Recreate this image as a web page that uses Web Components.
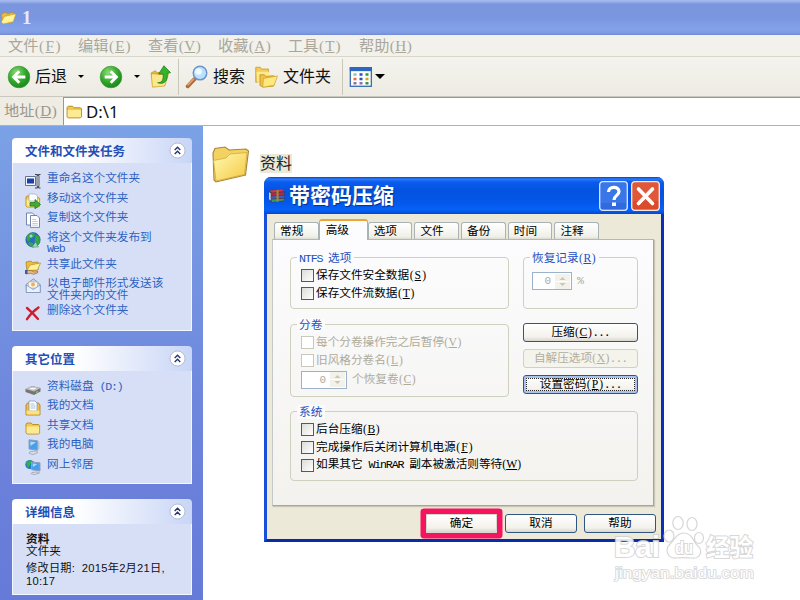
<!DOCTYPE html>
<html lang="zh-CN">
<head>
<meta charset="utf-8">
<title>1</title>
<style>
  html, body { margin: 0; height: 100%; overflow: hidden; background: #fff; }
  body { font-family: "Liberation Serif", "Noto Sans CJK SC", sans-serif; font-size: 11.65px; }
  .half { font-family: "Liberation Mono", monospace; letter-spacing: -.1em; white-space: pre; }
  .tahoma { font-family: "Noto Sans", "Noto Sans CJK SC", sans-serif; }
</style>
</head>
<body>
<explorer-window heading="1">
  <menu-item slot="menu" style="width:70px">文件<hot-key>F</hot-key></menu-item>
  <menu-item slot="menu" style="width:70px">编辑<hot-key>E</hot-key></menu-item>
  <menu-item slot="menu" style="width:70px">查看<hot-key>V</hot-key></menu-item>
  <menu-item slot="menu" style="width:70px">收藏<hot-key>A</hot-key></menu-item>
  <menu-item slot="menu" style="width:71px">工具<hot-key>T</hot-key></menu-item>
  <menu-item slot="menu">帮助<hot-key>H</hot-key></menu-item>

  <tool-button slot="tools" icon="back" size="24" style="width:92px" arrow>后退</tool-button>
  <tool-button slot="tools" icon="forward" size="24" style="width:50px" arrow></tool-button>
  <tool-button slot="tools" icon="up" size="23" style="width:29px"></tool-button>
  <tool-button slot="tools" icon="search" size="24" style="width:77px" divided>搜索</tool-button>
  <tool-button slot="tools" icon="folders" size="24" style="width:87px">文件夹</tool-button>
  <tool-button slot="tools" icon="views" size="24" divided arrow="big"></tool-button>

  <span slot="address-label">地址<hot-key>D</hot-key></span>
  <span slot="address" class="tahoma">D:\1</span>

  <task-panel slot="side" heading="文件和文件夹任务">
    <task-link icon="rename">重命名这个文件夹</task-link>
    <task-link icon="move">移动这个文件夹</task-link>
    <task-link icon="copy">复制这个文件夹</task-link>
    <task-link icon="globe">将这个文件夹发布到<br><span class="half">Web</span></task-link>
    <task-link icon="share">共享此文件夹</task-link>
    <task-link icon="mail">以电子邮件形式发送该<br>文件夹内的文件</task-link>
    <task-link icon="delete">删除这个文件夹</task-link>
  </task-panel>
  <task-panel slot="side" heading="其它位置">
    <task-link icon="disk">资料磁盘<span class="half"> (D:)</span></task-link>
    <task-link icon="docs">我的文档</task-link>
    <task-link icon="folder">共享文档</task-link>
    <task-link icon="computer">我的电脑</task-link>
    <task-link icon="network">网上邻居</task-link>
  </task-panel>
  <task-panel slot="side" heading="详细信息">
    <file-details name="资料" kind="文件夹">修改日期: &nbsp;2015年2月21日,<br>10:17</file-details>
  </task-panel>

  <folder-item>资料</folder-item>
</explorer-window>

<xp-dialog heading="带密码压缩">
  <tab-label slot="tabs">常规</tab-label>
  <tab-label slot="tabs" selected>高级</tab-label>
  <tab-label slot="tabs">选项</tab-label>
  <tab-label slot="tabs">文件</tab-label>
  <tab-label slot="tabs">备份</tab-label>
  <tab-label slot="tabs">时间</tab-label>
  <tab-label slot="tabs">注释</tab-label>

  <group-box slot="left" style="height:52px">
    <span slot="legend"><span class="half">NTFS </span>选项</span>
    <check-row>保存文件安全数据<hot-key>S</hot-key></check-row>
    <check-row>保存文件流数据<hot-key>T</hot-key></check-row>
  </group-box>
  <group-box slot="left" style="height:73px">
    <span slot="legend">分卷</span>
    <check-row disabled>每个分卷操作完之后暂停<hot-key>V</hot-key></check-row>
    <check-row disabled>旧风格分卷名<hot-key>L</hot-key></check-row>
    <spin-box value="0" style="--w:46px;margin:-1px 0 0 -1px">个恢复卷<hot-key>C</hot-key></spin-box>
  </group-box>

  <group-box slot="right" style="height:52px;margin-bottom:7px">
    <span slot="legend">恢复记录<hot-key>R</hot-key></span>
    <spin-box value="0" style="--w:40px;margin:3px 0 0 -3px"><span class="half">%</span></spin-box>
  </group-box>
  <xp-button slot="right">压缩<hot-key>C</hot-key><span class="half">...</span></xp-button>
  <xp-button slot="right" disabled>自解压选项<hot-key>X</hot-key><span class="half">...</span></xp-button>
  <xp-button slot="right" focused>设置密码<hot-key>P</hot-key><span class="half">...</span></xp-button>

  <group-box slot="bottom" style="height:70px">
    <span slot="legend">系统</span>
    <check-row>后台压缩<hot-key>B</hot-key></check-row>
    <check-row>完成操作后关闭计算机电源<hot-key>F</hot-key></check-row>
    <check-row>如果其它<span class="half"> WinRAR </span>副本被激活则等待<hot-key>W</hot-key></check-row>
  </group-box>

  <xp-button slot="footer" marked style="width:71px">确定</xp-button>
  <xp-button slot="footer" style="width:72px">取消</xp-button>
  <xp-button slot="footer" style="width:72px">帮助</xp-button>
</xp-dialog>

<water-mark></water-mark>

<script>
// Registra un elemento con su plantilla; {{attr}} se sustituye por el atributo
function define(name, css, html) {
  customElements.define(name, class extends HTMLElement {
    constructor() {
      super();
      this.attachShadow({ mode: 'open' });
    }
    connectedCallback() {
      const template = document.createElement('template');
      template.innerHTML = '<style>' + css + '</style>' +
        html.replace(/{{(\w+)}}/g, (m, a) => this.getAttribute(a) || '');
      this.shadowRoot.replaceChildren(template.content.cloneNode(true));
    }
  });
}

const folderShape = `
  <path d="M1 4.2 2 3h4.2l1.3 1.5h6.2l.9 1V13l-1 1H2l-1-1z" fill="#f3c84b" stroke="#b58a1c" stroke-width=".9"/>
  <path d="M1.6 6.6h12.6v6.3l-.6.6H2.2l-.6-.6z" fill="#fdeb94"/>`;

const icons = {
  folder: folderShape,
  open: `
    <path d="M1 5 5 3l2 1.4L12.500 3l1 2L12 12l-9 1.500z" fill="#e8b93a" stroke="#b58a1c" stroke-width=".6"/>
    <path d="M1 12.500 4 7l11-2.500-2.500 7.500-9 2z" fill="#fff39c" stroke="#c79a25" stroke-width=".6"/>`,
  back: `
    <defs><radialGradient id="g" cx=".38" cy=".3" r=".75"><stop offset="0" stop-color="#8fdc7c"/><stop offset=".55" stop-color="#35a82c"/><stop offset="1" stop-color="#14851a"/></radialGradient></defs>
    <circle cx="8" cy="8" r="7.200" fill="url(#g)" stroke="#3f9a3a" stroke-width=".5"/>
    <path d="M8.200 4.200 4.400 8l3.800 3.800M4.800 8h7.400" fill="none" stroke="#fff" stroke-width="1.900"/>`,
  forward: `
    <defs><radialGradient id="g" cx=".38" cy=".3" r=".75"><stop offset="0" stop-color="#8fdc7c"/><stop offset=".55" stop-color="#35a82c"/><stop offset="1" stop-color="#14851a"/></radialGradient></defs>
    <circle cx="8" cy="8" r="7.200" fill="url(#g)" stroke="#3f9a3a" stroke-width=".5"/>
    <path d="M7.800 4.200 11.600 8l-3.800 3.800M11.200 8H3.800" fill="none" stroke="#fff" stroke-width="1.900"/>`,
  up: `
    <path d="M1.500 5.500 4.500 4l1 1.400 6-.9v7L3 13.500z" fill="#e9b83c" stroke="#b98d22" stroke-width=".5"/>
    <path d="M1.500 6l7 .5L13.600 6 11 14.600l-8.600.8z" fill="#fbe88a" stroke="#c79a25" stroke-width=".5"/>
    <path d="M6 12.300c3 .2 4.200-2 3.800-6H6.700L10.400.5 15 5.300l-2.300.6c.5 5.200-2.200 8-6.700 6.400z" fill="#37b22d" stroke="#187a1c" stroke-width=".5"/>`,
  search: `
    <path d="M1.800 14.200 6.500 9.300" stroke="#b56a35" stroke-width="2.600" stroke-linecap="round"/>
    <path d="M1.800 13.500 6 9.200" stroke="#eaa873" stroke-width=".9"/>
    <circle cx="10" cy="5.400" r="4.500" fill="#b9e3fb" stroke="#6f93cf" stroke-width="1"/>
    <circle cx="9" cy="4.300" r="2.200" fill="#eefaff"/>`,
  folders: `
    <path d="M.5 1.500h3l1 1.200h4.500V10l-8.500 1.500z" fill="#f3cc57" stroke="#c3962a" stroke-width=".5"/>
    <path d="M1 4.500h8.800L9 10l-7.500 1.500z" fill="#fde98c"/>
    <path d="M3.300 6.500h3l1 1.200 4.500-.6 2.500 1-2 6-7 .6-2-1z" fill="#f0c145" stroke="#b98d22" stroke-width=".5"/>
    <path d="M5.600 9 15 7.300l-2.200 6.200-7.600 1.300z" fill="#ffe97e" stroke="#c79a25" stroke-width=".4"/>`,
  views: `
    <rect x=".9" y="1.800" width="14" height="12.400" fill="#fff" stroke="#3c6fb5" stroke-width=".9"/>
    <path d="M.5 1.500h14.800v2.600H.5z" fill="#2a67bd"/>
    <path d="M3 5.500h2v1.700H3z" fill="#9bb"/><path d="M7 5.500h2v1.700H7zM7 8.500h2v1.700H7z" fill="#2456b5"/>
    <path d="M11 5.500h2v1.700h-2zM11 11.300h2V13h-2z" fill="#2c9a35"/><path d="M3 8.500h2v1.700H3z" fill="#e2713c"/>
    <path d="M11 8.500h2v1.700h-2z" fill="#d9a520"/><path d="M3 11.300h2V13H3zM7 11.300h2V13H7z" fill="#8a6fb5"/>`,
  rename: `
    <path d="M.5 3.500h10v9H.5z" fill="#f4f6ff" stroke="#66708f"/><path d="M2 5.500h7v5H2z" fill="#1c3fa8"/>
    <path d="M10 1.500h2l1 1 1-1h1.500M10 15h2l1-1.500 1 1.500h1.500" fill="none" stroke="#39424f" stroke-width="1.100"/><path d="M12 2.500h2v11h-2z" fill="#d5dae8" stroke="#39424f" stroke-width=".8"/>`,
  move: folderShape + `<path d="M4 1h6l2.500 2v5H4z" fill="#fff" stroke="#8ea0b5" stroke-width=".6"/><path d="M5 9.500h5V6.500l5.500 5-5.500 4.300V13H5z" fill="#3dae33" stroke="#14701b" stroke-width=".7"/>`,
  copy: `
    <path d="M1.500 1h6l2 2v10h-8z" fill="#fff" stroke="#667aa5" stroke-width=".9"/>
    <path d="M5.500 3.500h6.500l2.500 2.500V15.400h-9z" fill="#fff" stroke="#667aa5" stroke-width=".9"/>
    <path d="M7.200 7.500H11M7.200 9.500h5.600M7.200 11.500h5.600M7.200 13.200h5.600" stroke="#9fb4d8" stroke-width=".7"/>`,
  globe: `
    <circle cx="8" cy="7.800" r="7.200" fill="#2b6cc4" stroke="#17508a" stroke-width=".6"/>
    <path d="M2 4c2-3 5-3.300 8-2.500L9 5 5.500 6 4 9.500 1.500 8zM10.500 3l3.600 1c1 3 .8 6.500-1 9L9.500 10zM4 10l4 1-.5 3.500C5.500 14.500 4 13 3 12z" fill="#33a849"/>
    <path d="M7 15 10.500 10l3 5z" fill="#a5d8b0" stroke="#3b8a48" stroke-width=".5"/><circle cx="6" cy="4" r="1.500" fill="#bfe9d0" opacity=".8"/>`,
  share: `
    <path d="M1 3l5-1 1.500 1.500L13 3v8L2 13z" fill="#edbd43" stroke="#a67c19" stroke-width=".7"/>
    <path d="M2 11.500 5 6l10.500-2L12.500 11z" fill="#fff09a" stroke="#b98d22" stroke-width=".7"/>
    <path d="M1 11.500h5l3 1.500 4-.5-.5 1.500-4 1.300-3-1L1 15z" fill="#e8b98b" stroke="#8a5a35" stroke-width=".6"/><path d="M0 11h2.500v4H0z" fill="#2f5fae"/>`,
  mail: `
    <path d="M1 6.500 8.500.8l6.700 5.700V14.500H1.500z" fill="#c2d5f2" stroke="#7389b5" stroke-width=".8"/>
    <path d="M3.500 4h9v6h-9z" fill="#fff5e2" stroke="#b5a58a" stroke-width=".5"/>
    <path d="M1.300 7l7 4.500 6.900-4.500v7.500H1.300z" fill="#e9f1ff" stroke="#7389b5" stroke-width=".7"/><circle cx="8" cy="6.500" r="2" fill="#e9b06a"/>`,
  delete: `<path d="M2 3c3 2.500 7.500 7 11 11M13.500 2.500C9 5.500 5 9.500 2 14.200" fill="none" stroke="#c8202c" stroke-width="2.300" stroke-linecap="round"/>`,
  disk: `
    <path d="M.5 8 7 5l8.500 2v3.500L9 14 .5 11z" fill="#757575"/><path d="M.5 8 7 5l8.500 2L9 10.500z" fill="#c2c2c2"/>
    <ellipse cx="7.800" cy="7.600" rx="3.500" ry="1.400" fill="#fafafa" stroke="#999" stroke-width=".5"/><path d="M11 11.500l2-1" stroke="#7fe36b"/>`,
  docs: `
    <path d="M1 5l1.500-2h11L15 5v10H1z" fill="#efbf45" stroke="#a67c19" stroke-width=".8"/>
    <path d="M4 1h6l2 2v8H4z" fill="#fff" stroke="#7d90b5" stroke-width=".7"/><path d="M5.500 4h4M5.500 6h5M5.500 8h5" stroke="#8fb0e0" stroke-width=".8"/>
    <path d="M1.500 10.500h13v4h-13z" fill="#fbe184"/>`,
  computer: `
    <path d="M4 .8l8.500 1v9.500L4 10z" fill="#4a9de8" stroke="#8fa0ba" stroke-width="1"/><path d="M5.200 2.500 11 3.200 5.500 7z" fill="#a5dbff"/>
    <path d="M12.800 2l1.600.8V10l-1.600 1z" fill="#b9c1cf"/><path d="M5 12.500l6-.5 2 1.500-5 2.200-4-1.500z" fill="#d7dbe3" stroke="#8a94a5" stroke-width=".6"/>`,
  network: `
    <circle cx="4.800" cy="5.500" r="4.500" fill="#2579c4"/><path d="M1 4c2-3 5-3 6-2L5 6 3 9z" fill="#35b04a"/>
    <path d="M6.500 3l8.500.8v8.200l-8.500-1.300z" fill="#4a9de8" stroke="#8fa0ba" stroke-width="1"/><path d="M7.700 4.500l4.800.5-4.600 3z" fill="#a5dbff"/>
    <path d="M7 13.500l5-.5 2.500 1-5 1.700-3.500-1z" fill="#d7dbe3" stroke="#8a94a5" stroke-width=".6"/>`,
  rar: `
    <path d="M1 3.500 13 2l2.500 2v9L4 14.500 1 12z" fill="#4b3b4b"/>
    <path d="M1 3.500 13 2l2.500 1.800L4 5.500z" fill="#c93a4a"/><path d="M3 6l12-1v2.200L3 8.300z" fill="#b8283e"/>
    <path d="M3 9l12-1v2L3 11z" fill="#3e5fc5"/><path d="M3 11.800 15 11v1.800L4 14z" fill="#3c9a55"/>
    <path d="M8 3l2-.3v11L8 14z" fill="#a8853a"/><path d="M1 5l1.500.8v7L1 11.500z" fill="#ddd"/>`
};

// Icono vectorial elegido por nombre
class XpIcon extends HTMLElement {
  constructor() {
    super();
    this.attachShadow({ mode: 'open' });
  }
  connectedCallback() {
    const size = this.getAttribute('size') || 16;
    this.shadowRoot.innerHTML = `
      <style>:host { display: block; flex: none; width: ${size}px; height: ${size}px; } svg { display: block; }</style>
      <svg width="${size}" height="${size}" viewBox="0 0 16 16">${icons[this.getAttribute('name')] || ''}</svg>`;
  }
}
customElements.define('xp-icon', XpIcon);

// Tecla de acceso entre paréntesis
define('hot-key', `
  :host { display: inline-flex; width: 1.5em; justify-content: space-around; font-family: "Liberation Serif", serif; }
  u { text-underline-offset: 1px; text-decoration-thickness: 1px; }
`, '<span>(</span><u><slot></slot></u><span>)</span>');

// Ventana del explorador
define('explorer-window', `
  :host { display: flex; flex-direction: column; width: 800px; height: 600px; font-size: 16px; }
  header {
    display: flex; align-items: center; height: 35px; box-sizing: border-box; padding: 0; gap: 5px;
    background: linear-gradient(#a9bdf0 0, #95aeea 2px, #7b96df 4px, #7a96e0 18px, #84a2ea 29px, #7e9ae2 33px, #718bd2);
    color: #e4ebfb; font-size: 19px; font-weight: bold;
  }
  .menu { display: flex; height: 22px; background: #f2f1ec; border-bottom: 1px solid #dad7ca; padding-left: 8px; box-sizing: border-box; }
  .tools { display: flex; height: 40px; box-sizing: border-box; align-items: center; padding-left: 7px;
    background: linear-gradient(#f4f3ee, #edebe2); border-bottom: 1px solid #c9c8bf; }
  .address { display: flex; height: 29px; box-sizing: border-box; background: #eeece3; border-bottom: 1px solid #a5b5bf; }
  .label { width: 63px; box-sizing: border-box; padding-left: 4px; line-height: 28px; color: #99978c; font-size: 15.200px; }
  .field { flex: 1; display: flex; align-items: center; gap: 3px; padding-left: 2px; background: #fff; border: solid #7f9db9; border-width: 1px 0 0 1px; line-height: 28px; font-size: 16.800px; color: #111; }
  .main { flex: 1; display: flex; min-height: 0; }
  aside { width: 203px; box-sizing: border-box; padding: 12px 11px 5px 12px; display: flex; flex-direction: column; gap: 15px;
    background: linear-gradient(#7ba1e6, #6b80da 75%, #667bd8); font-size: 11.650px; }
  main { flex: 1; padding: 20px 8px; }
`, `
  <header><xp-icon name="open" size="17"></xp-icon><span>{{heading}}</span></header>
  <div class="menu"><slot name="menu"></slot></div>
  <div class="tools"><slot name="tools"></slot></div>
  <div class="address">
    <div class="label"><slot name="address-label"></slot></div>
    <div class="field"><xp-icon name="folder" size="17"></xp-icon><slot name="address"></slot></div>
  </div>
  <div class="main"><aside><slot name="side"></slot></aside><main><slot></slot></main></div>
`);

define('menu-item', ':host { display: block; font-size: 15.200px; line-height: 22px; color: #aaa799; white-space: nowrap; }', '<slot></slot>');

define('tool-button', `
  :host { display: flex; flex: none; align-items: center; gap: 4px; height: 36px; box-sizing: border-box; color: #111; font-size: 16px; line-height: 20px; white-space: nowrap; }
  :host([divided]) { border-left: 1px solid #c9c7ba; padding-left: 6px; }
  i { display: none; border: 3px solid transparent; border-top-color: #000; border-bottom: 0; }
  :host([arrow]) i { display: block; margin-left: 7px; }
  :host([arrow="big"]) i { border-width: 5px 5px 0; margin-left: -2px; }
  :host([icon="forward"]) slot { display: none; }
`, '<xp-icon name="{{icon}}" size="{{size}}"></xp-icon><slot></slot><i></i>');

define('task-panel', `
  :host { display: block; width: 180px; flex: none; }
  header { display: flex; align-items: center; justify-content: space-between; height: 25px; padding: 0 6px 0 13px; box-sizing: border-box;
    border-radius: 4px 4px 0 0; background: linear-gradient(90deg, #fff 35%, #c8d5f6); color: #1f4fb8; font-weight: bold; font-size: 12.500px; }
  .body { border: 1px solid #f4f7ff; border-top: 0; background: #d6dff6; padding: 10px 10px 8.200px 12px; display: flex; flex-direction: column; gap: 3.600px; }
  svg { display: block; }
`, `
  <header><span>{{heading}}</span>
    <svg width="17" height="17" viewBox="0 0 17 17"><circle cx="8.500" cy="8.500" r="7.500" fill="#fff" stroke="#a9b5d6" stroke-width=".9"/>
    <path d="M5.700 8 8.500 5.200 11.300 8M5.700 12l2.800-2.800 2.800 2.800" fill="none" stroke="#24356f" stroke-width="1.400"/></svg>
  </header>
  <div class="body"><slot></slot></div>
`);

define('task-link', `
  :host { display: flex; align-items: flex-start; gap: 6px; color: #2e5fc2; line-height: 11.700px; white-space: nowrap; }
`, '<xp-icon name="{{icon}}"></xp-icon><div><slot></slot></div>');

define('file-details', `
  :host { display: block; padding-left: 1px; line-height: 12px; color: #111; height: 52px; }
  b { display: block; }
  p { margin: 4px 0 0; line-height: 12.500px; font-family: "Liberation Sans", "Noto Sans CJK SC", sans-serif; font-size: 11.200px; letter-spacing: .25px; }
`, '<b>{{name}}</b><div>{{kind}}</div><p><slot></slot></p>');

define('folder-item', `
  :host { display: flex; align-items: flex-start; gap: 10px; font-size: 16px; color: #222; }
  span { background: #ece9d8; line-height: 19px; margin-top: 8px; }
  svg { display: block; }
`, `
  <svg width="39" height="38" viewBox="0 0 39 38">
    <defs><linearGradient id="f" x1="0" y1="0" x2="1" y2="1"><stop offset="0" stop-color="#fffab0"/><stop offset="1" stop-color="#f6c844"/></linearGradient></defs>
    <path d="M2 7 4 2.500 14 1l4 3 17-1 2.500 2-3 24L5 36 3 34z" fill="#f3d262" stroke="#a8853a" stroke-width="1.100"/>
    <path d="M2.500 14.500 15 12l4-4 17-1.500-2.500 22L5 35z" fill="url(#f)" stroke="#d0a93f" stroke-width=".8"/>
  </svg><span><slot></slot></span>
`);

// Cuadro de diálogo flotante
define('xp-dialog', `
  :host { position: absolute; left: 264px; top: 177px; width: 400px; height: 365px; box-sizing: border-box; display: flex; flex-direction: column;
    border: solid #1243cf; border-color: #1243cf #0b2fb5 #0a2ba8 #1850dc; border-width: 0 3px 3px; border-radius: 7px 7px 0 0; background: #ece9d8; color: #000; }
  header { display: flex; align-items: center; height: 37px; flex: none; margin: 0 -3px; box-sizing: border-box; padding: 0 4px 0 4px; border-radius: 7px 7px 0 0;
    background: linear-gradient(#0a3fc4, #2b7bf8 2px, #0a5cee 5px, #0453e0 14px, #0457ea 25px, #0662f8 33px, #0448cc); color: #fff; }
  h1 { flex: 1; margin: 0 0 0 4px; font-size: 21px; line-height: 38px; font-weight: bold; text-shadow: 1px 1px 1px #0b2f91; }
  .sys { width: 29px; height: 30px; margin-left: 3px; }
  .tabs { display: flex; height: 25px; flex: none; align-items: flex-end; padding-left: 7px; }
  .page { margin: 0 7px 0 5px; height: 267px; flex: none; box-sizing: border-box; padding: 17px 15px 0 17px; border: 1px solid #a3a69f; border-top-color: #b3b8bb; border-left-color: #c4c8c9; background: linear-gradient(#fcfcfe, #f3f2ee);
    box-shadow: 1px 1px 1px #c9c6b5; }
  .cols { display: grid; grid-template-columns: 219px 115px; column-gap: 14px; margin-bottom: 14px; height: 140px; }
  .left { display: flex; flex-direction: column; gap: 15px; }
  .right { display: flex; flex-direction: column; gap: 6.500px; }
  footer { display: flex; flex: 1; align-items: flex-start; justify-content: flex-end; padding: 7.500px 5px 0 0; gap: 7px; }
`, `
  <header>
    <xp-icon name="rar" size="17"></xp-icon><h1>{{heading}}</h1>
    <svg class="sys" viewBox="0 0 29 30"><rect x=".7" y=".7" width="27.600" height="28.600" rx="3" fill="#3a76e8" stroke="#dbe7ff" stroke-width="1.300"/><path d="M2 22h25v6H2z" fill="#2c62d8" opacity=".6"/>
      <path d="M9.500 11c0-6 10.500-6 10.500-.5 0 4-5 3.800-5 8.500" fill="none" stroke="#fff" stroke-width="3.200"/><path d="M13 21.500h4V25h-4z" fill="#fff"/></svg>
    <svg class="sys" viewBox="0 0 29 30"><rect x=".7" y=".7" width="27.600" height="28.600" rx="3" fill="#e0583a" stroke="#ffe7df" stroke-width="1.300"/><path d="M2 20h25v8H2z" fill="#cf3d1c" opacity=".5"/>
      <path d="M7.500 8l14 14.500M21.500 8l-14 14.500" stroke="#fff" stroke-width="3.600" stroke-linecap="round"/></svg>
  </header>
  <div class="tabs"><slot name="tabs"></slot></div>
  <div class="page">
    <div class="cols"><div class="left"><slot name="left"></slot></div><div class="right"><slot name="right"></slot></div></div>
    <slot name="bottom"></slot>
  </div>
  <footer><slot name="footer"></slot></footer>
`);

define('tab-label', `
  :host { display: block; width: 44.700px; height: 17px; margin-right: 2px; box-sizing: border-box; padding-left: 5px; line-height: 18px;
    border: 1px solid #a9b3b6; border-bottom: 0; border-radius: 3px 3px 0 0; background: linear-gradient(#fff, #f0f0ea 85%, #dedcd0); }
  :host([selected]) { width: 49px; height: 21px; margin: 0 0 -1px -2px; z-index: 1; line-height: 19px; padding-left: 6px; border-top: 2.500px solid #e8a838; background: #fcfcfe; }
`, '<slot></slot>');

define('group-box', `
  :host { display: block; box-sizing: border-box; border: 1px solid #d0d0bf; border-radius: 4px; padding: 0 11px; }
  .legend { width: fit-content; margin: -7.500px 0 0 -5px; padding: 0 3px 0 2px; line-height: 15px; height: 14px; color: #1d4fc0; background: #fbfbfc; white-space: nowrap; }
  .rows { display: flex; flex-direction: column; gap: 4.200px; padding-top: 4.500px; }
`, '<div class="legend"><slot name="legend"></slot></div><div class="rows"><slot></slot></div>');

define('check-row', `
  :host { display: flex; align-items: center; gap: 2px; height: 13.600px; line-height: 14px; white-space: nowrap; margin-left: -1px; }
  i { width: 13px; height: 13px; box-sizing: border-box; border: 1px solid #33608f; background: linear-gradient(135deg, #dcdcd7, #fff); }
  :host([disabled]) { color: #aeab9c; }
  :host([disabled]) i { border-color: #cac8bb; background: #fff; }
`, '<i></i><div><slot></slot></div>');

define('spin-box', `
  :host { display: flex; align-items: center; gap: 5px; height: 18px; color: #aeab9c; white-space: nowrap; line-height: 14px; }
  .box { width: var(--w); height: 18px; box-sizing: border-box; display: flex; align-items: center; justify-content: flex-end; gap: 4px; padding-right: 1px;
    border: 1px solid #9bb3ca; background: #fff; font-family: "Liberation Mono", monospace; font-size: 11px; }
  svg { background: #f2f1ea; }
`, `
  <div class="box">{{value}}<svg width="15" height="15" viewBox="0 0 15 15"><path d="M.5 7.500h14" stroke="#fff"/><path d="M4.500 6 7.500 3l3 3zM4.500 9l3 3 3-3z" fill="#c9c7ba"/></svg></div>
  <div><slot></slot></div>
`);

define('xp-button', `
  :host { display: block; height: 19.500px; box-sizing: border-box; border: 1px solid #2f5583; border-radius: 3px; text-align: center; line-height: 18px; white-space: nowrap;
    background: linear-gradient(#fff, #f3f2ec 75%, #dad6ca); }
  :host([disabled]) { color: #b1ae9f; border-color: #d2d0c2; background: #f4f3ec; }
  :host([focused]) { box-shadow: inset 0 0 0 2px #a9c3ee; outline: 1px dotted #222; outline-offset: -4px; }
  :host([marked]) { border-color: #d9d6cf; box-shadow: 0 0 0 5.500px #f5145f; margin-right: 1px; border-radius: 1px; }
`, '<slot></slot>');

// Marca de agua translúcida
define('water-mark', `
  :host { position: absolute; left: 612px; top: 512px; width: 148px; height: 74px; }
  svg { display: block; }
  text { fill: #fff; stroke: #d2d2d2; stroke-width: 2px; paint-order: stroke; }
`, `
  <svg width="148" height="74" viewBox="0 0 148 74" opacity=".88">
    <g fill="#fff" stroke="#d2d2d2" stroke-width="1.200">
      <ellipse cx="57" cy="24" rx="5" ry="6"/><ellipse cx="66" cy="11" rx="5.200" ry="6.500"/><ellipse cx="80" cy="12" rx="5" ry="6.500"/><ellipse cx="87" cy="26" rx="4.500" ry="5.500"/>
      <path d="M72 21c8 0 9 8 13 12 7 6 3 14-5 13-4 0-11-1-16 0-8 1-12-8-6-14 5-4 6-11 14-11z"/>
    </g>
    <text x="2" y="45" font-family="Liberation Sans" font-weight="bold" font-size="30" textLength="46" lengthAdjust="spacingAndGlyphs">Bai</text>
    <text x="63" y="42" font-family="Liberation Sans" font-weight="bold" font-size="18" textLength="18" lengthAdjust="spacingAndGlyphs">du</text>
    <text x="94" y="44" font-family="Noto Sans CJK SC" font-weight="bold" font-size="24" textLength="47" lengthAdjust="spacingAndGlyphs">经验</text>
    <text x="3" y="66" font-family="Liberation Sans" font-size="15.500" style="stroke-width:1.600px" textLength="139" lengthAdjust="spacingAndGlyphs">jingyan.baidu.com</text>
  </svg>
`);
</script>
</body>
</html>
